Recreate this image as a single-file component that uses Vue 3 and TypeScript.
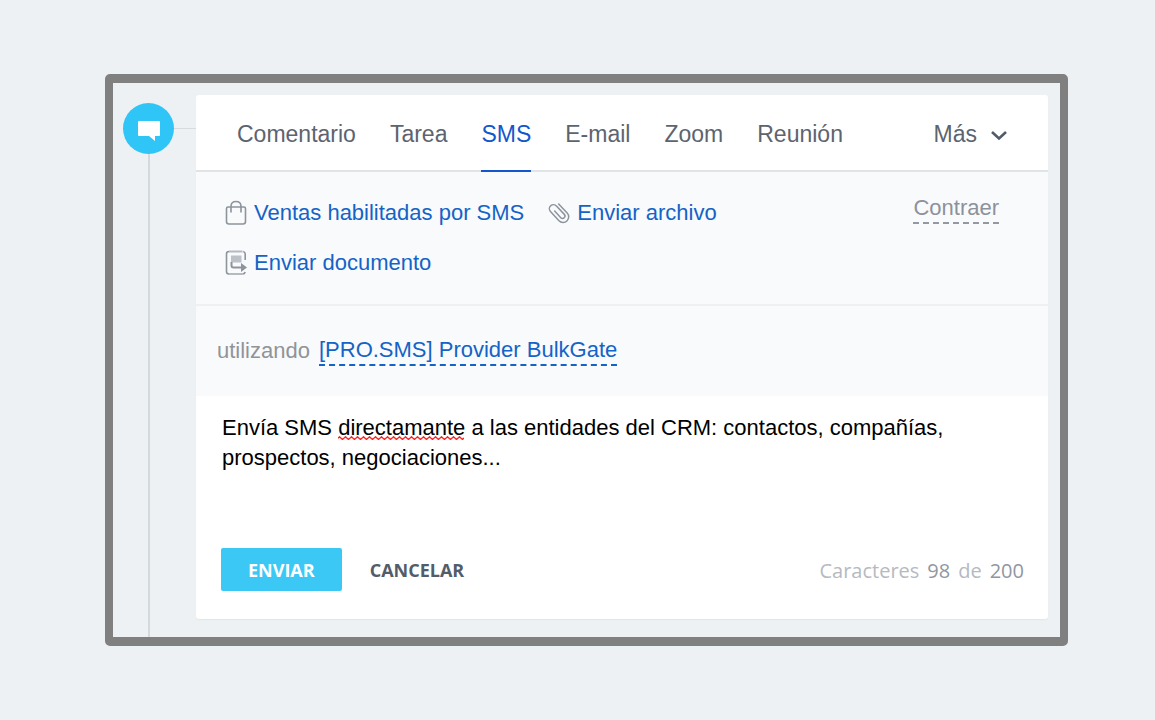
<script setup lang="ts">
import { ref } from 'vue'

const tabs = ['Comentario', 'Tarea', 'SMS', 'E-mail', 'Zoom', 'Reunión']
const activeTab = ref('SMS')
const provider = '[PRO.SMS] Provider BulkGate'
const message = ref(
  'Envía SMS directamante a las entidades del CRM: contactos, compañías, prospectos, negociaciones...',
)
const limit = 200
</script>

<template>
  <div class="page">
    <main class="frame">
      <div class="rail">
        <div class="node">
          <span class="bubble">
            <svg width="22" height="20" viewBox="0 0 22 20" aria-hidden="true">
              <path d="M1 0h20q1 0 1 1v13q0 1-1 1h-4v5l-6-5H1q-1 0-1-1V1q0-1 1-1z" fill="#fff" />
            </svg>
          </span>
          <span class="branch"></span>
        </div>
        <div class="stem"></div>
      </div>

      <section class="card">
        <nav class="tabs">
          <button
            v-for="tab in tabs"
            :key="tab"
            type="button"
            class="tab"
            :class="{ active: tab === activeTab }"
            @click="activeTab = tab"
          >{{ tab }}</button>
          <button type="button" class="tab more">
            Más
            <svg width="16" height="14" viewBox="0 0 16 14" aria-hidden="true">
              <path d="M1 5l7 6.500L15 5" fill="none" stroke="#525c69" stroke-width="2.600" />
            </svg>
          </button>
        </nav>

        <div class="actions">
          <div class="links">
            <a href="#" class="link">
              <svg width="22" height="26" viewBox="0 0 22 26" fill="none" stroke="#8d949c" aria-hidden="true">
                <path d="M3 7h16q1.500 0 1.500 1.500v13q0 2.500-2.500 2.500H4q-2.500 0-2.500-2.500v-13Q1.500 7 3 7z" stroke-width="1.600" />
                <path d="M6 12.500V6.500Q6 1.500 11 1.500t5 5v6" stroke-width="1.600" />
              </svg>
              <span>Ventas habilitadas por SMS</span>
            </a>
            <a href="#" class="link">
              <svg width="22" height="26" viewBox="0 0 22 26" fill="none" stroke="#8d949c" aria-hidden="true">
                <path
                  transform="translate(11 12.500) rotate(-43)"
                  d="M5.600-6.500V6A5.600 5.600 0 0 1-5.600 6V-6.500A4.100 4.100 0 0 1 2.600-6.500V5A2.400 2.400 0 0 1-2.200 5V-4"
                  stroke-width="1.500"
                  stroke-linecap="round"
                />
              </svg>
              <span>Enviar archivo</span>
            </a>
            <a href="#" class="link">
              <svg width="22" height="26" viewBox="0 0 22 26" fill="none" stroke="#8d949c" aria-hidden="true">
                <path d="M4 1.500h13.500M4 24h13.500" stroke="#b4bac0" stroke-width="2.200" />
                <path d="M20.200 10V4q0-2-2-2.500M4 1.500Q1.500 1.500 1.500 4v17.500Q1.500 24 4 24M17.500 24q2.200 0 2.700-2" stroke-width="1.600" />
                <path d="M6 5.500h10.500v7H6z" fill="#bcc1c7" stroke="none" />
                <path d="M6.500 12v3.500q0 2 2 2H18" stroke-width="2" />
                <path d="M16 13l6 4.500-6 4.500z" fill="#8d949c" stroke="none" />
              </svg>
              <span>Enviar documento</span>
            </a>
          </div>
          <button type="button" class="collapse">Contraer</button>
        </div>

        <div class="sender">
          <span>utilizando</span>
          <a href="#" class="provider">{{ provider }}</a>
        </div>

        <div class="editor">
          <textarea v-model="message" class="message" aria-label="Mensaje SMS" spellcheck="false"></textarea>
          <svg class="squiggle" width="126" height="4" aria-hidden="true">
            <defs>
              <pattern id="wave" width="6" height="4" patternUnits="userSpaceOnUse">
                <path d="M-1.500 3.500L1.500 .8l3 2.700 3-2.700" fill="none" stroke="#f22" stroke-width="1.400" />
              </pattern>
            </defs>
            <rect width="126" height="4" fill="url(#wave)" />
          </svg>
        </div>

        <footer class="footer">
          <button type="button" class="send">ENVIAR</button>
          <button type="button" class="cancel">CANCELAR</button>
          <p class="counter">
            <span>Caracteres</span>
            <span class="num">{{ message.length }}</span>
            <span>de</span>
            <span class="num">{{ limit }}</span>
          </p>
        </footer>
      </section>
    </main>
  </div>
</template>

<style>
body {
  background: #edf1f4;
}
</style>

<style scoped>
.page {
  box-sizing: border-box;
  padding: 74px 87px 74px 105px;
  font-family: "Liberation Sans", Arial, sans-serif;
  font-size: 22px;
  line-height: 30px;
}
button {
  border: 0;
  margin: 0;
  padding: 0;
  background: none;
  font: inherit;
  color: inherit;
  cursor: pointer;
}
a {
  color: #1463c7;
  text-decoration: none;
}
.frame {
  display: flex;
  border: 8px solid #808080;
  border-top-width: 9px;
  border-bottom-width: 9px;
  border-radius: 5px;
  padding-right: 12px;
  background: #edf1f4;
}
.rail {
  display: flex;
  flex-direction: column;
  flex: 0 0 83px;
  padding-top: 20px;
}
.node {
  display: flex;
  align-items: center;
  padding-left: 10px;
}
.bubble {
  display: flex;
  align-items: center;
  justify-content: center;
  box-sizing: border-box;
  width: 51px;
  height: 51px;
  padding-top: 4px;
  border-radius: 50%;
  background: #2fc6f7;
}
.branch {
  flex: 1;
  height: 1px;
  background: #d5dbde;
}
.stem {
  flex: 1;
  width: 2px;
  margin-left: 35px;
  background: #d3dadd;
}
.card {
  flex: 1;
  min-width: 0;
  margin: 12px 0 18px;
  border-radius: 3px;
  background: #fff;
  box-shadow: 0 1px 1px #e2e6e8;
  overflow: hidden;
}
.tabs {
  display: flex;
  gap: 34px;
  padding: 0 41px;
  border-bottom: 2px solid #e1e4e7;
  color: #5c6470;
  font-size: 23px;
}
.tab {
  display: flex;
  align-items: center;
  gap: 14px;
  height: 77px;
  margin-bottom: -2px;
  padding-top: 2px;
  border-bottom: 2px solid transparent;
}
.tab.active {
  border-bottom-color: #1457cc;
  color: #1457cc;
}
.more {
  margin-left: auto;
}
.actions {
  display: flex;
  justify-content: space-between;
  align-items: flex-start;
  padding: 26px 49px 26px 29px;
  border-bottom: 2px solid #eef0f2;
  background: #f9fafc;
}
.links {
  display: flex;
  flex-wrap: wrap;
  gap: 20px 24px;
  max-width: 560px;
}
.link {
  display: flex;
  align-items: center;
  gap: 7px;
}
.collapse {
  border-bottom: 2px dashed #9299a3;
  color: #8b929c;
  line-height: 28px;
  margin-top: -4px;
}
.sender {
  display: flex;
  gap: 9px;
  padding: 30px 21px;
  background: #f9fafc;
  color: #8f9498;
}
.provider {
  border-bottom: 2px dashed #1463c7;
  line-height: 28px;
  height: 28px;
}
.editor {
  position: relative;
  display: flex;
}
.message {
  box-sizing: border-box;
  width: 100%;
  height: 152px;
  border: 0;
  margin: 0;
  padding: 17px 26px;
  background: transparent;
  color: #000;
  font: inherit;
  resize: none;
  outline: 0;
}
.squiggle {
  position: absolute;
  top: 40px;
  left: 142px;
}
.footer {
  display: flex;
  align-items: center;
  gap: 28px;
  padding: 0 24px 28px 25px;
  font-family: "Open Sans", sans-serif;
  font-size: 18px;
}
.send {
  height: 43px;
  padding: 0 27px;
  border-radius: 2px;
  background: #3bc8f5;
  color: #fff;
  font-weight: 700;
}
.cancel {
  color: #535c69;
  font-weight: 700;
}
.counter {
  display: flex;
  gap: 8px;
  margin: 0 0 0 auto;
  padding-top: 2px;
  color: #b5bac1;
  font-size: 20px;
}
.num {
  color: #8f97a2;
}
</style>
